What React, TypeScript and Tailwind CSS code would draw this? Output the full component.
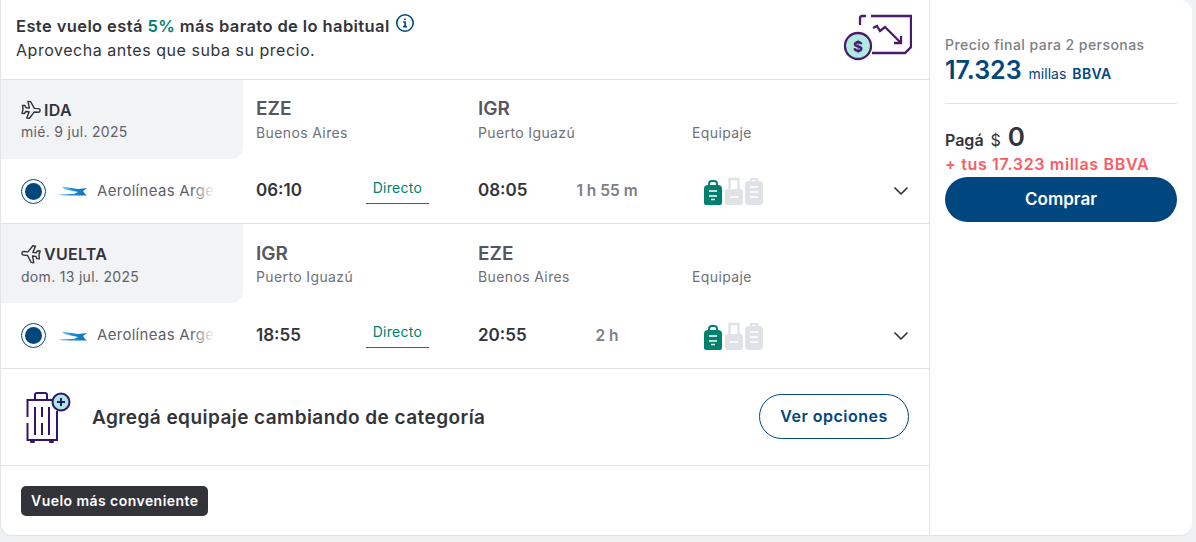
import { ChevronDown } from "lucide-react"

function PlaneIcon({ back }: { back?: boolean }) {
	return (
		<svg width="20" height="20" viewBox="0 0 24 24" fill="none" stroke="#32343a" strokeWidth="1.7" strokeLinejoin="round" className={back ? "-scale-x-100 rotate-[6deg]" : "rotate-[4deg]"}>
			<path d="M23 12c0-1.3-1.2-2.2-2.6-2.2h-4.5L10.8 2H7.6l2.3 7.8H6L4.3 7.2H1.4l1 4.8-1 4.8h2.9L6 14.2h3.9L7.6 22h3.2l5.1-7.8h4.5c1.4 0 2.6-.9 2.6-2.2z" />
		</svg>
	)
}

function AirlineLogo() {
	return (
		<svg width="30" height="10" viewBox="0 0 30 10">
			<defs>
				<linearGradient id="arg" x1="0" x2="1" y1="0" y2="0">
					<stop offset="0" stopColor="#7cc6ee" stopOpacity="0.5" />
					<stop offset="0.45" stopColor="#1b8fd8" />
					<stop offset="1" stopColor="#0f6fb4" />
				</linearGradient>
			</defs>
			<path d="M4 .5 20 3l9-1-4 3 2 3 2 1.5H4L0 8h16l4-2L6 3z" fill="url(#arg)" />
		</svg>
	)
}

function Luggage() {
	return (
		<div className="flex items-end gap-[2px]">
			<svg width="18" height="25" viewBox="0 0 18 25" className="mr-[1px]">
				<path d="M5 6V4a3 3 0 0 1 3-3h2a3 3 0 0 1 3 3v2" fill="none" stroke="#00816d" strokeWidth="2" />
				<path d="M4 5h10a4 4 0 0 1 4 4v14a2 2 0 0 1-2 2H2a2 2 0 0 1-2-2V9a4 4 0 0 1 4-4z" fill="#00816d" />
				<path d="M5 11h8M5 16h8M7 19.5h4" stroke="#fff" strokeWidth="1.6" />
			</svg>
			<svg width="18" height="28" viewBox="0 0 18 28">
				<path d="M4.5 13V2h9v11" fill="none" stroke="#dfe2e7" strokeWidth="2.4" />
				<rect x="0" y="12" width="18" height="16" rx="3" fill="#dfe2e7" />
				<path d="M5 20h8" stroke="#fff" strokeWidth="1.6" />
			</svg>
			<svg width="18" height="28" viewBox="0 0 18 28">
				<path d="M6 5V2h6v3" fill="none" stroke="#dfe2e7" strokeWidth="2" />
				<rect x="0" y="4" width="18" height="24" rx="4" fill="#dfe2e7" />
				<path d="M5 10h8M5 15h8M5 20h8" stroke="#fff" strokeWidth="1.6" />
			</svg>
		</div>
	)
}

function Segment(props: {
	label: string
	date: string
	from: string
	fromCity: string
	to: string
	toCity: string
	depart: string
	arrive: string
	duration: string
	back?: boolean
}) {
	const colTop = props.back ? "pt-[17px]" : "pt-[16px]"
	const cityLine = props.back
		? "text-[14px] leading-[20px] tracking-[0.38px] text-[#6f7078]"
		: "text-[14px] leading-[22px] tracking-[0.38px] text-[#6f7078]"
	return (
		<div className="border-b border-[#e2e4e9]">
			<div className="flex h-[79px]">
				<div className="w-[242px] bg-[#f2f3f5] rounded-br-xl pl-[20px] pt-[18px]">
					<div className="flex items-center gap-[3px] h-[24px]">
						<PlaneIcon back={props.back} />
						<span className="text-[16px] font-semibold tracking-[0.3px] text-[#32343a]">{props.label}</span>
					</div>
					<p className={props.back ? "mt-[1px] text-[14px] leading-[20px] tracking-[0.3px] text-[#5f6068]" : "text-[14px] leading-[20px] tracking-[0.3px] text-[#5f6068]"}>{props.date}</p>
				</div>
				<div className={`w-[235px] pl-[13px] ${colTop}`}>
					<p className="text-[19px] leading-[26px] font-semibold text-[#55565e]">{props.from}</p>
					<p className={cityLine}>{props.fromCity}</p>
				</div>
				<div className={`w-[214px] ${colTop}`}>
					<p className="text-[19px] leading-[26px] font-semibold text-[#55565e]">{props.to}</p>
					<p className={cityLine}>{props.toCity}</p>
				</div>
				<div className="pt-[42px]">
					<p className="text-[14px] leading-[22px] tracking-[0.38px] text-[#6f7078]">Equipaje</p>
				</div>
			</div>
			<div className={props.back ? "flex items-center h-[65px]" : "flex items-center h-[64px]"}>
				<div className="flex items-center w-[255px] pl-[20px]">
					<div className="w-[25px] h-[25px] rounded-full border border-[#00467f] flex items-center justify-center">
						<div className="w-[17px] h-[17px] rounded-full bg-[#00467f]" />
					</div>
					<div className="ml-[12px] w-[30px] flex">
						<AirlineLogo />
					</div>
					<div className="relative ml-[9px] w-[118px] whitespace-nowrap text-[15px] tracking-[0.3px] text-[#5f6068]">
						Aerolíneas Arge
						<div className="absolute inset-y-0 right-0 w-[24px] bg-gradient-to-r from-white/0 to-white" />
					</div>
				</div>
				<div className="w-[110px] text-[17px] font-semibold text-[#32343a]">{props.depart}</div>
				<div className={props.back ? "w-[63px] h-[32px] pt-[5px] border-b border-[#00816d] text-center text-[14px] leading-[22px] tracking-[0.3px] text-[#00816d] -mt-[8px]" : "w-[63px] h-[32px] pt-[5px] border-b border-[#00816d] text-center text-[14px] leading-[22px] tracking-[0.3px] text-[#00816d] -mt-[6px]"}>Directo</div>
				<div className="w-[49px]" />
				<div className="w-[97px] text-[17px] font-semibold text-[#32343a]">{props.arrive}</div>
				<div className="w-[64px] text-center text-[15.5px] font-semibold text-[#7d7e86] whitespace-nowrap">{props.duration}</div>
				<div className="ml-[65px]"><Luggage /></div>
				<div className="flex-1 flex justify-end pr-[16px]">
					<ChevronDown className="w-[24px] h-[24px] text-[#32343a]" strokeWidth={1.7} />
				</div>
			</div>
		</div>
	)
}

export default function App() {
	return (
		<div className="h-[542px] w-[1196px] bg-[#f0f1f3]" style={{ fontFamily: "Inter, sans-serif" }}>
			<div className="w-[1192px] h-[536px] bg-white rounded-b-xl rounded-tr-xl border-l border-b border-[#e2e4e9] flex">
				<div className="w-[928px] border-r border-[#e2e4e9] box-content flex flex-col">
					<div className="h-[80px] border-b border-[#e2e4e9] flex justify-between pl-[15px] pr-[17px] pt-[15px]">
						<div>
							<div className="flex items-start">
								<p className="text-[16.5px] leading-[23px] font-semibold tracking-[0.4px] text-[#32343a]">
									Este vuelo está <span className="text-[#00816d]">5%</span> más barato de lo habitual
								</p>
								<svg width="20" height="20" viewBox="0 0 20 20" fill="none" className="ml-[5px] -mt-[2px]">
									<circle cx="10" cy="10" r="8.2" stroke="#00467f" strokeWidth="1.6" />
									<path d="M10 5.6v1.4M8.2 9h1.9v4.4M8 13.6h4" stroke="#00467f" strokeWidth="1.6" />
								</svg>
							</div>
							<p className="text-[16px] leading-[24px] tracking-[0.53px] text-[#32343a]">Aprovecha antes que suba su precio.</p>
						</div>
						<svg width="70" height="48" viewBox="0 0 70 48" fill="none" className="-mt-[1px]">
							<path d="M18 11V4a2 2 0 0 1 2-2h4M29 2h40v31l-6 6H30" stroke="#4b1a6e" strokeWidth="2.3" />
							<path d="M31 14l4-2 3 5 5-4 15 15" stroke="#4b1a6e" strokeWidth="2.3" />
							<path d="M59 22v7h-7" stroke="#4b1a6e" strokeWidth="2.3" />
							<circle cx="16" cy="32" r="13" fill="#b0eadd" stroke="#4b1a6e" strokeWidth="2.3" />
							<text x="16" y="37.5" textAnchor="middle" fontSize="15" fontWeight="800" fill="#4b1a6e" fontFamily="Inter, sans-serif">$</text>
						</svg>
					</div>
					<Segment
						label="IDA"
						date="mié. 9 jul. 2025"
						from="EZE"
						fromCity="Buenos Aires"
						to="IGR"
						toCity="Puerto Iguazú"
						depart="06:10"
						arrive="08:05"
						duration="1 h 55 m"
					/>
					<Segment
						back
						label="VUELTA"
						date="dom. 13 jul. 2025"
						from="IGR"
						fromCity="Puerto Iguazú"
						to="EZE"
						toCity="Buenos Aires"
						depart="18:55"
						arrive="20:55"
						duration="2 h"
					/>
					<div className="h-[97px] border-b border-[#e2e4e9] flex items-center pl-[25px] pr-[20px]">
						<svg width="46" height="54" viewBox="0 0 46 54" fill="none">
							<path d="M9 10V5a2 2 0 0 1 2-2h8a2 2 0 0 1 2 2v5" stroke="#35146f" strokeWidth="2" />
							<path d="M27 10H1.5v17M1.5 33v17H31V21" stroke="#35146f" strokeWidth="2" />
							<path d="M9 17v28M16 17v10M16 33v12M23 17v28" stroke="#35146f" strokeWidth="2" />
							<rect x="4" y="50" width="5" height="3" rx="1.5" fill="#35146f" />
							<rect x="23" y="50" width="5" height="3" rx="1.5" fill="#35146f" />
							<circle cx="35" cy="12" r="8.5" fill="#a8e8da" stroke="#35146f" strokeWidth="2" />
							<path d="M35 8v8M31 12h8" stroke="#35146f" strokeWidth="2" />
						</svg>
						<p className="ml-[20px] mt-[2px] text-[19px] font-semibold tracking-[0.44px] text-[#32343a]">Agregá equipaje cambiando de categoría</p>
						<button className="ml-auto -mt-[2px] w-[150px] h-[45px] rounded-full border border-[#00467f] text-[16px] font-semibold tracking-[0.5px] text-[#00467f]">Ver opciones</button>
					</div>
					<div className="flex-1 pl-[20px] pt-[20px]">
						<span className="inline-block h-[30px] px-[10px] rounded-[5px] bg-[#32343a] text-white text-[14px] leading-[30px] font-semibold tracking-[0.45px]">Vuelo más conveniente</span>
					</div>
				</div>
				<div className="flex-1 pl-[15px] pr-[15px] pt-[36px]">
					<p className="text-[14px] leading-[18px] font-medium tracking-[0.45px] text-[#7d7e86]">Precio final para 2 personas</p>
					<p className="leading-[32px] text-[#00467f]">
						<span className="text-[25px] font-semibold">17.323</span>
						<span className="ml-[7px] text-[14px]">millas</span>
						<span className="ml-[6px] text-[14px] font-semibold tracking-[0.4px]">BBVA</span>
					</p>
					<div className="mt-[13px] border-t border-[#e2e4e9]" />
					<p className="mt-[19px] leading-[27px] text-[#32343a]">
						<span className="text-[16px] font-semibold">Pagá</span>
						<span className="ml-[7px] text-[16px]">$</span>
						<span className="ml-[7px] text-[26px] font-semibold">0</span>
					</p>
					<p className="text-[16px] leading-[20px] font-semibold tracking-[0.67px] text-[#ff5a64]">+ tus 17.323 millas BBVA</p>
					<button className="mt-[3px] w-full h-[45px] rounded-full bg-[#00467f] text-white text-[17px] font-semibold">Comprar</button>
				</div>
			</div>
		</div>
	)
}
